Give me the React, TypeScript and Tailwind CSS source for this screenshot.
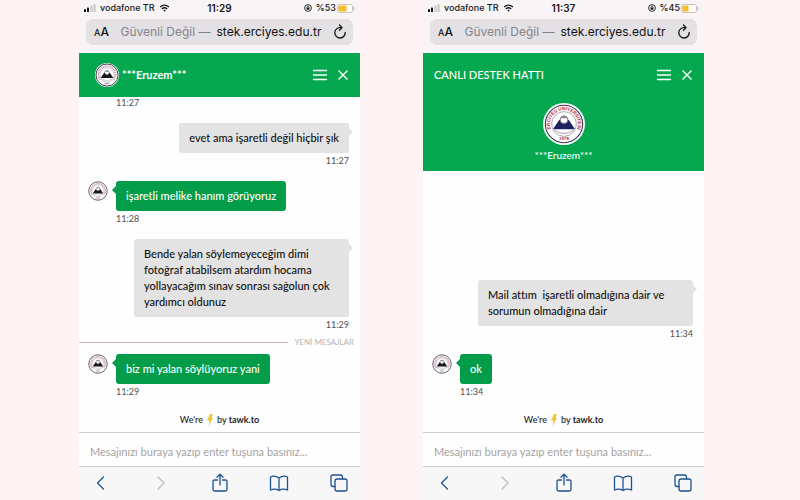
import React, { useId } from "react";

type Message =
  | { kind: "sent" | "received"; text: string; time: string }
  | { kind: "time"; time: string }
  | { kind: "divider"; text: string };

const leftMessages: Message[] = [
  { kind: "time", time: "11:27" },
  { kind: "sent", text: "evet ama işaretli değil hiçbir şık", time: "11:27" },
  { kind: "received", text: "işaretli melike hanım görüyoruz", time: "11:28" },
  {
    kind: "sent",
    text: "Bende yalan söylemeyeceğim dimi fotoğraf atabilsem atardım hocama yollayacağım sınav sonrası sağolun çok yardımcı oldunuz",
    time: "11:29",
  },
  { kind: "divider", text: "YENİ MESAJLAR" },
  { kind: "received", text: "biz mi yalan söylüyoruz yani", time: "11:29" },
];

const rightMessages: Message[] = [
  { kind: "sent", text: "Mail attım  işaretli olmadığına dair ve sorumun olmadığına dair", time: "11:34" },
  { kind: "received", text: "ok", time: "11:34" },
];

function Seal({ className, detailed = false }: { className: string; detailed?: boolean }) {
  const id = useId();
  return (
    <svg viewBox="0 0 40 40" className={className} aria-hidden="true">
      <circle cx="20" cy="20" r="20" fill="#fff" />
      <circle cx="20" cy="20" r={detailed ? 17.8 : 18.4} fill="none" stroke="#3b3450" strokeWidth={detailed ? 1 : 1.6} />
      {detailed ? (
        <>
          <defs>
            <path id={id} d="M11 29.8 A13.3 13.3 0 1 1 29 29.8" />
          </defs>
          <text fill="#b3202f" fontSize="4.4" fontWeight="700" fontFamily="Liberation Sans, sans-serif">
            <textPath href={`#${id}`} startOffset="50%" textAnchor="middle">
              ERCİYES ÜNİVERSİTESİ
            </textPath>
          </text>
          <text x="20" y="35.6" textAnchor="middle" fill="#b3202f" fontSize="4.2" fontWeight="700" fontFamily="Liberation Sans, sans-serif">
            1978
          </text>
        </>
      ) : (
        <>
          <path d="M8.5 28 A14.2 14.2 0 1 1 31.5 28" fill="none" stroke="#cf9da8" strokeWidth="3" strokeDasharray="2 1" />
          <path d="M16 34 h8" stroke="#cf9da8" strokeWidth="2" />
        </>
      )}
      <circle cx="20" cy="20" r="11.8" fill="#fff" stroke="#8b8592" strokeWidth="0.7" />
      <path d="M9.5 25 L15.5 16 L20 19 L24.5 16 L30.5 25 Z" fill={detailed ? "#1e2460" : "#17151f"} />
      <circle cx="20" cy="16" r="3.6" fill="#fff" stroke="#77737f" strokeWidth="1" />
      <path d="M16.6 14.5 a3.6 3.6 0 0 1 6.8 0 Z" fill="#8b8791" />
      <path d="M11 26 Q20 32 29 26" fill="none" stroke="#a09ca6" strokeWidth="0.9" />
    </svg>
  );
}

function StatusBar({ time, battery, level }: { time: string; battery: string; level: number }) {
  return (
    <div className="grid h-4 grid-cols-[1fr_auto_1fr] items-center px-[5px] text-[9px] leading-4 font-medium text-[#151515]">
      <div className="flex items-center gap-1">
        <svg viewBox="0 0 12 8" className="h-2 w-3" aria-hidden="true">
          <rect x="0" y="5" width="2" height="3" rx=".5" fill="#151515" />
          <rect x="3" y="3.5" width="2" height="4.5" rx=".5" fill="#151515" />
          <rect x="6.5" y="1.5" width="2" height="6.5" rx=".5" fill="#c9c6c8" />
          <rect x="9.5" y="0" width="2" height="8" rx=".5" fill="#c9c6c8" />
        </svg>
        <span className="whitespace-nowrap">vodafone TR</span>
        <svg viewBox="0 0 12 9" className="h-2 w-[11px]" fill="none" stroke="#151515" strokeWidth="1.5" aria-hidden="true">
          <path d="M1 3.4 Q6 -.8 11 3.4" />
          <path d="M3 5.5 Q6 3 9 5.5" />
          <path d="M4.6 7 L6 8.6 L7.4 7 Q6 5.8 4.6 7Z" fill="#151515" stroke="none" />
        </svg>
      </div>
      <span className="text-[10px] font-semibold">{time}</span>
      <div className="flex items-center justify-end gap-1">
        <svg viewBox="0 0 8 8" className="size-2" fill="none" stroke="#151515" aria-hidden="true">
          <circle cx="4" cy="4" r="3.4" strokeWidth=".9" />
          <rect x="2.6" y="3.7" width="2.8" height="2" fill="#151515" stroke="none" />
          <path d="M3.1 4 V3 a.9 .9 0 0 1 1.8 0 V4" strokeWidth=".7" />
        </svg>
        <span className="flex items-center">
          {battery}
          <svg viewBox="0 0 18 9" className="ml-px h-[9px] w-[18px]" aria-hidden="true">
            <rect x=".5" y=".5" width="15" height="8" rx="2" fill="#fffdf6" stroke="#c6c1ba" />
            <rect x="1.5" y="1.5" width={level} height="6" rx="1" fill="#f5c02c" />
            <path d="M17 3 v3" stroke="#c6c1ba" strokeWidth="1.2" />
          </svg>
        </span>
      </div>
    </div>
  );
}

function AddressBar() {
  return (
    <div className="mx-[7px] mt-[3px] mb-2 flex h-[26px] items-center rounded-[7px] bg-[#e3e1e3] pr-[6px] pl-2 text-[#111]">
      <button type="button" aria-label="Metin boyutu" className="flex items-baseline text-[12px] leading-4 font-medium">
        <span className="text-[9px]">A</span>A
      </button>
      <button type="button" className="flex flex-1 justify-center gap-[6px] text-[12px] leading-4 whitespace-nowrap">
        <span className="text-[#85838a]">Güvenli Değil —</span>
        <span>stek.erciyes.edu.tr</span>
      </button>
      <button type="button" aria-label="Yenile">
        <svg viewBox="0 0 14 16" className="h-4 w-[14px]" fill="none" stroke="#151515" strokeWidth="1.3" strokeLinecap="round" strokeLinejoin="round">
          <path d="M12.2 8.5 A5.2 5.2 0 1 1 7 3.6 h1.5" />
          <path d="M6.5 1 L9 3.6 L6.5 6.2" />
        </svg>
      </button>
    </div>
  );
}

function HeaderActions() {
  return (
    <div className="flex items-center gap-[10px]">
      <button type="button" aria-label="Menü">
        <svg viewBox="0 0 14 12" className="h-3 w-[14px]" stroke="#fff" strokeWidth="1.4">
          <path d="M0 1.5 H14 M0 6 H14 M0 10.5 H14" />
        </svg>
      </button>
      <button type="button" aria-label="Kapat">
        <svg viewBox="0 0 12 12" className="size-3" stroke="#fff" strokeWidth="1.4">
          <path d="M1.5 1.5 L10.5 10.5 M10.5 1.5 L1.5 10.5" />
        </svg>
      </button>
    </div>
  );
}

function MessageItem({ message }: { message: Message }) {
  if (message.kind === "time") {
    return <time className="ml-[37px] block text-[9px] leading-3 text-[#4e4e4e]">{message.time}</time>;
  }
  if (message.kind === "divider") {
    return (
      <div className="mt-[5px] -mb-2 flex items-center gap-[6px] pr-[6px]">
        <span className="h-px flex-1 bg-[#cdb9bc]" />
        <span className="text-[8px] leading-3 text-[#b9b2b4]">{message.text}</span>
      </div>
    );
  }
  if (message.kind === "sent") {
    return (
      <div className="mt-[14px] mr-[11px] ml-[55px] flex flex-col items-end">
        <div className="relative rounded-[3px] bg-[#e3e3e3] px-[10px] py-[7px] text-[11px] leading-4 font-medium whitespace-pre-wrap text-[#111] [font-variant-ligatures:none]">
          {message.text}
          <svg viewBox="0 0 5 10" className="absolute top-1 -right-1 h-[10px] w-[5px]" fill="#e3e3e3" aria-hidden="true">
            <path d="M0 0 L5 5 L0 10Z" />
          </svg>
        </div>
        <time className="mt-0.5 text-[9px] leading-3 text-[#4e4e4e]">{message.time}</time>
      </div>
    );
  }
  return (
    <div className="mt-[14px] mr-[55px] ml-[9px] flex items-start gap-2">
      <Seal className="size-5 shrink-0" />
      <div className="flex flex-col items-start">
        <div className="relative rounded-[3px] bg-[#039c48] px-[10px] py-[7px] text-[11px] leading-4 font-medium text-white [font-variant-ligatures:none]">
          {message.text}
          <svg viewBox="0 0 5 10" className="absolute top-1 -left-1 h-[10px] w-[5px]" fill="#039c48" aria-hidden="true">
            <path d="M5 0 L0 5 L5 10Z" />
          </svg>
        </div>
        <time className="mt-0.5 text-[9px] leading-3 text-[#4e4e4e]">{message.time}</time>
      </div>
    </div>
  );
}

function BrowserToolbar() {
  return (
    <nav className="flex h-[33px] items-center justify-between bg-[#f7f7f8] px-[11px] pb-[2px] text-[#1f5293] [&_svg]:size-5 [&_svg]:fill-none [&_svg]:stroke-current [&_svg]:[stroke-linecap:round] [&_svg]:[stroke-linejoin:round] [&_svg]:[stroke-width:1.3]">
      <button type="button" aria-label="Geri">
        <svg viewBox="0 0 20 20"><path d="M13.5 4 L7.5 10 L13.5 16" /></svg>
      </button>
      <button type="button" aria-label="İleri" className="text-[#bcbcc0]">
        <svg viewBox="0 0 20 20"><path d="M8 4 L14 10 L8 16" /></svg>
      </button>
      <button type="button" aria-label="Paylaş">
        <svg viewBox="0 0 20 20"><path d="M7.5 7 H4.5 Q3 7 3 8.5 V16.5 Q3 18 4.5 18 H15.5 Q17 18 17 16.5 V8.5 Q17 7 15.5 7 H12.5 M10 12 V1.5 M7 4.2 L10 1.2 L13 4.2" /></svg>
      </button>
      <button type="button" aria-label="Yer imleri">
        <svg viewBox="0 0 20 20"><path d="M10 5 Q5.5 1.8 1.5 4 V17 Q6 15 10 17.5 Q14 15 18.5 17 V4 Q14.5 1.8 10 5 V17.5" /></svg>
      </button>
      <button type="button" aria-label="Sekmeler">
        <svg viewBox="0 0 20 20">
          <path d="M6 13.5 H4 Q2 13.5 2 11.5 V4 Q2 2 4 2 H11.5 Q13.5 2 13.5 4 V6" />
          <rect x="6" y="6" width="12" height="12" rx="2" />
        </svg>
      </button>
    </nav>
  );
}

type PhoneProps = {
  time: string;
  battery: string;
  level: number;
  header: React.ReactNode;
  messages: Message[];
};

function Phone({ time, battery, level, header, messages }: PhoneProps) {
  return (
    <section className="flex min-h-screen min-w-0 flex-1 flex-col bg-[#f9f5f7]">
      <div className="font-[Inter,sans-serif]">
        <StatusBar time={time} battery={battery} level={level} />
        <AddressBar />
      </div>
      {header}
      <main className="flex flex-1 flex-col justify-end bg-[#fefefe]">
        {messages.map((message, index) => (
          <MessageItem key={index} message={message} />
        ))}
        <p className="mt-[14px] mb-1 flex items-center justify-center gap-1 text-[9px] leading-4 font-medium text-[#242424]">
          We're
          <svg viewBox="0 0 6 12" className="h-3 w-[6px]" fill="#edc63b" aria-hidden="true">
            <path d="M3 0 H6 L4.3 4 H6 L1.5 12 L2.5 6.5 H0Z" />
          </svg>
          <span>
            by <a href="#tawk" className="font-bold">tawk.to</a>
          </span>
        </p>
      </main>
      <div className="border-y border-[#cfcfd1] bg-[#fefefe]">
        <input
          type="text"
          aria-label="Mesaj"
          placeholder="Mesajınızı buraya yazıp enter tuşuna basınız..."
          className="block h-[33px] w-full bg-transparent px-[11px] pt-1 text-[11px] outline-none placeholder:text-[#a4a4a4]"
        />
      </div>
      <BrowserToolbar />
    </section>
  );
}

export default function App() {
  return (
    <div className="flex min-h-screen gap-[63px] bg-[#fef3f5] pr-[96px] pl-[79px] font-[Lato,sans-serif]">
      <Phone
        time="11:29"
        battery="%53"
        level={8}
        messages={leftMessages}
        header={
          <header className="flex h-11 items-center justify-between bg-[#06a84f] pr-[11px] pl-4 text-white">
            <div className="flex items-center gap-[3px]">
              <Seal className="size-6" />
              <h1 className="text-[11px] leading-4 font-bold">***Eruzem***</h1>
            </div>
            <HeaderActions />
          </header>
        }
      />
      <Phone
        time="11:37"
        battery="%45"
        level={6}
        messages={rightMessages}
        header={
          <header className="bg-[#06a84f] pb-2 text-white">
            <div className="flex h-11 items-center justify-between pr-[11px] pl-[11px]">
              <h1 className="text-[11px] leading-4 font-medium">CANLI DESTEK HATTI</h1>
              <HeaderActions />
            </div>
            <div className="flex flex-col items-center gap-[2px] pt-[6px]">
              <Seal className="size-[42px]" detailed />
              <p className="text-[10px] leading-4 font-medium">***Eruzem***</p>
            </div>
          </header>
        }
      />
    </div>
  );
}
